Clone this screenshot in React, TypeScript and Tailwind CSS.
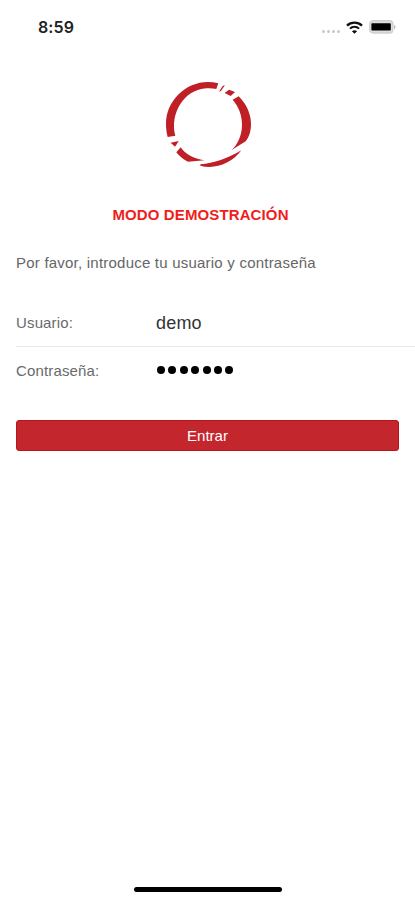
import { FC, ReactNode } from "react";

const PASSWORD_LENGTH = 7;

const StatusBar: FC = () => {
  return (
    <div className="flex h-[54px] w-full items-center justify-between pl-[38px] pr-[19px]">
      <span className="font-[Inter] text-[16px] font-semibold leading-5 tracking-[0.1px] text-[#222]">
        8:59
      </span>
      <div className="flex items-center">
        <div className="mr-[6px] mt-[8px] flex gap-[2px]">
          {[0, 1, 2, 3].map((dot) => (
            <span key={dot} className="h-[3px] w-[3px] rounded-full bg-[#c9c9c9]" />
          ))}
        </div>
        <svg width="17" height="13" viewBox="0 0 17 13" fill="none" className="mr-[6px]">
          <path d="M1 4.6C5.2 0.6 11.8 0.6 16 4.6" stroke="#111" strokeWidth="2.3" />
          <path d="M3.9 7.6C6.5 5.1 10.5 5.1 13.1 7.6" stroke="#111" strokeWidth="2" />
          <path d="M8.5 12.8L5.9 10.3C7.4 8.9 9.6 8.9 11.1 10.3Z" fill="#111" />
        </svg>
        <svg width="27" height="14" viewBox="0 0 27 14" fill="none">
          <rect x="0.8" y="0.8" width="23" height="12.2" rx="3.2" fill="#dedede" stroke="#cfcfcf" strokeWidth="1.4" />
          <rect x="2.4" y="3.2" width="19.4" height="7.4" rx="0.8" fill="#000" />
          <path d="M25.2 4.8C26.9 5.6 26.9 8.4 25.2 9.2Z" fill="#aaa" />
        </svg>
      </div>
    </div>
  );
};

const Logo: FC = () => {
  return (
    <svg width="105" height="105" viewBox="0 0 315 315" fill="#be2026">
      <path d="M190 34C111 13 32 76 33 157C33 171 35 183 38 195L61 191C44 127 86 52 155 49C164 48 174 49 184 51Z" />
      <path d="M210 39L203 42L192 59L198 57Z" />
      <path d="M222 53L240 60L227 72L209 63Z" />
      <path d="M251 73C298 119 295 182 272 208L229 235C269 199 273 128 233 83Z" />
      <path d="M47 212L71 207L67 214L60 224Z" />
      <path d="M77 226C91 248 116 259 148 265L99 269C84 262 73 252 64 241Z" />
      <path d="M136 277C177 274 217 260 259 235C229 276 178 293 136 281Z" />
    </svg>
  );
};

const FormRow: FC<{ label: string; children: ReactNode }> = ({ label, children }) => {
  return (
    <div className="flex h-[47px] items-center">
      <span className="w-[140px] pt-[2px] text-[15px] tracking-[0.15px] text-[#6a6a6a]">
        {label}
      </span>
      {children}
    </div>
  );
};

const App: FC = () => {
  return (
    <main className="flex h-[900px] w-full flex-col items-center overflow-hidden bg-white font-['Liberation_Sans',Arial,sans-serif]">
      <StatusBar />
      <div className="mt-[18px]">
        <Logo />
      </div>
      <h1 className="mt-[28px] -ml-[14px] whitespace-nowrap text-[15px] font-bold leading-5 tracking-[0.12px] text-[#f01d1d]">
        MODO DEMOSTRACIÓN
      </h1>
      <p className="mt-[28px] w-full whitespace-nowrap pl-4 text-[15px] leading-5 tracking-[0.22px] text-[#666]">
        Por favor, introduce tu usuario y contraseña
      </p>
      <form className="mt-[26px] w-full pl-4">
        <FormRow label="Usuario:">
          <span className="pt-px text-[18px] tracking-[0.2px] text-[#333]">demo</span>
        </FormRow>
        <div className="h-px bg-[#ebebeb]" />
        <FormRow label="Contraseña:">
          <div className="mb-[2px] ml-[1px] flex gap-[3.4px]">
            {Array.from({ length: PASSWORD_LENGTH }, (_, i) => (
              <span key={i} className="h-2 w-2 rounded-full bg-black" />
            ))}
          </div>
        </FormRow>
        <button
          type="button"
          className="mt-[26px] mr-4 flex h-[31px] w-[383px] items-center justify-center rounded-[3px] border border-[#b9141c] bg-[#c4262e] pt-[2px] text-[15px] text-white"
        >
          Entrar
        </button>
      </form>
      <div className="mt-auto mb-[8px] h-[5px] w-[148px] rounded-full bg-black" />
    </main>
  );
};

export default App;
